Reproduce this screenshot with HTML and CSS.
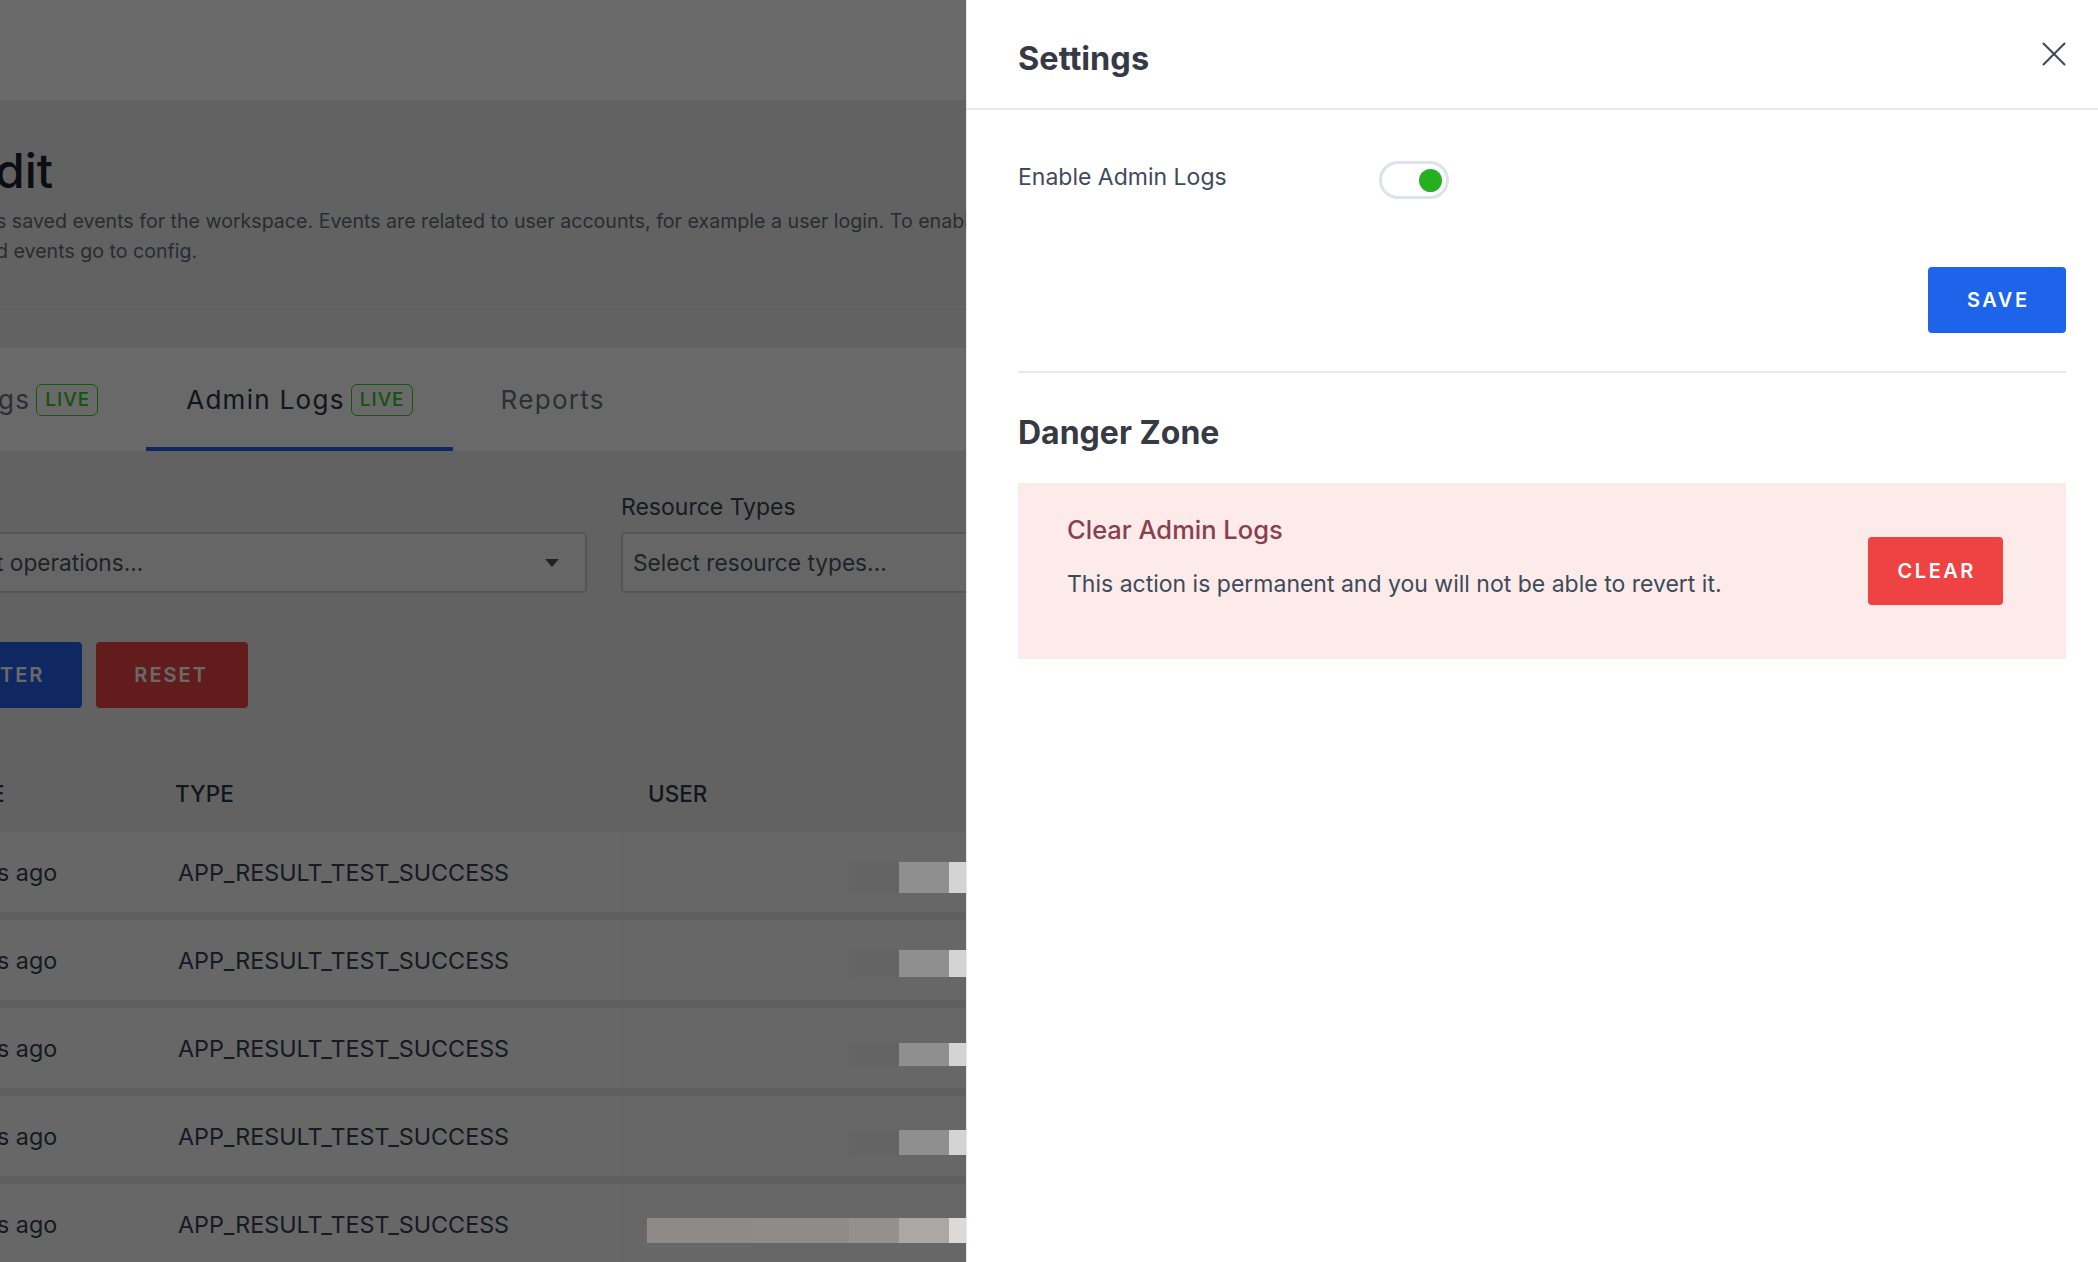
FILE: index.html
```html
<!DOCTYPE html>
<html lang="en">
<head>
<meta charset="utf-8">
<title>Admin Logs – Settings</title>
<link rel="stylesheet" href="styles.css">
</head>
<body>
<div class="app">
  <header class="topbar"></header>

  <section class="intro">
    <h1 class="intro-title">dit</h1>
    <p class="intro-desc">s saved events for the workspace. Events are related to user accounts, for example a user login. To enable the more detailed<br>d events go to config.</p>
  </section>

  <nav class="tabs">
    <div class="tab tab-first"><span>gs</span><span class="badge">LIVE</span></div>
    <div class="tab tab-active"><span>Admin Logs</span><span class="badge">LIVE</span></div>
    <div class="tab"><span>Reports</span></div>
  </nav>

  <section class="filters">
    <div class="filter-grid">
      <div class="filter-label"></div>
      <div class="filter-label">Resource Types</div>
      <div class="select select-first"><span class="select-text-cut">t operations...</span><span class="caret"></span></div>
      <div class="select">Select resource types...</div>
    </div>
    <div class="actions">
      <button class="btn btn-filter">TER</button>
      <button class="btn btn-reset">RESET</button>
    </div>

    <div class="table">
      <div class="thead">
        <div class="th th-cut">E</div>
        <div class="th th-type">TYPE</div>
        <div class="th th-user">USER</div>
      </div>
      <div class="rows">
        <div class="row">
          <div class="cell cell-time">s ago</div>
          <div class="cell cell-type">APP_RESULT_TEST_SUCCESS</div>
          <div class="cell cell-user"><div class="redact redact-short r-h31"><i class="px px-a"></i><i class="px px-b"></i><i class="px px-c"></i></div></div>
        </div>
        <div class="row">
          <div class="cell cell-time">s ago</div>
          <div class="cell cell-type">APP_RESULT_TEST_SUCCESS</div>
          <div class="cell cell-user"><div class="redact redact-short r-h27"><i class="px px-a"></i><i class="px px-b"></i><i class="px px-c"></i></div></div>
        </div>
        <div class="row">
          <div class="cell cell-time">s ago</div>
          <div class="cell cell-type">APP_RESULT_TEST_SUCCESS</div>
          <div class="cell cell-user"><div class="redact redact-short r-h23"><i class="px px-a"></i><i class="px px-b"></i><i class="px px-c"></i></div></div>
        </div>
        <div class="row">
          <div class="cell cell-time">s ago</div>
          <div class="cell cell-type">APP_RESULT_TEST_SUCCESS</div>
          <div class="cell cell-user"><div class="redact redact-short r-h25"><i class="px px-a"></i><i class="px px-b"></i><i class="px px-c"></i></div></div>
        </div>
        <div class="row">
          <div class="cell cell-time">s ago</div>
          <div class="cell cell-type">APP_RESULT_TEST_SUCCESS</div>
          <div class="cell cell-user"><div class="redact redact-long r-h25"><i class="px px-w1"></i><i class="px px-w2"></i><i class="px px-w3"></i><i class="px px-w4"></i><i class="px px-w5"></i></div></div>
        </div>
      </div>
    </div>
  </section>
</div>

<div class="overlay"></div>

<aside class="drawer">
  <div class="drawer-header">
    <h2 class="drawer-title">Settings</h2>
    <button class="close" aria-label="Close">
      <svg width="24" height="24" viewBox="0 0 24 24" fill="none" stroke="#3d4758" stroke-width="2" stroke-linecap="round"><line x1="1.5" y1="1.5" x2="22.5" y2="22.5"/><line x1="22.5" y1="1.5" x2="1.5" y2="22.5"/></svg>
    </button>
  </div>
  <div class="drawer-body">
    <div class="setting-row">
      <span class="setting-label">Enable Admin Logs</span>
      <span class="toggle"><span class="knob"></span></span>
    </div>
    <div class="save-row"><button class="btn-solid btn-save">SAVE</button></div>
    <div class="divider"></div>
    <h3 class="section-title">Danger Zone</h3>
    <div class="danger-box">
      <div class="danger-text">
        <div class="danger-title">Clear Admin Logs</div>
        <div class="danger-desc">This action is permanent and you will not be able to revert it.</div>
      </div>
      <button class="btn-solid btn-clear">CLEAR</button>
    </div>
  </div>
</aside>
</body>
</html>
```

FILE: styles.css
```css
* { box-sizing: border-box; }

html, body {
  margin: 0;
  padding: 0;
}

body {
  width: 2098px;
  height: 1262px;
  overflow: hidden;
  background: #efefef;
  font-family: Inter, "Noto Sans", "Liberation Sans", sans-serif;
}

/* ---------- underlying page ---------- */
.app {
  width: 2098px;
}

.topbar {
  height: 100px;
  background: #ffffff;
}

.intro {
  height: 210px;
  padding-top: 42px;
  background: #efefef;
  border-bottom: 1px solid #e0e0e0;
}

.intro-title {
  margin: 0 0 0 -5px;
  font-size: 48px;
  line-height: 58px;
  font-weight: 500;
  color: #1a2230;
}

.intro-desc {
  margin: 6px 0 0 -4px;
  font-size: 19.6px;
  line-height: 30px;
  color: #646b78;
  white-space: nowrap;
}

.tabs {
  margin-top: 38px;
  height: 103px;
  background: #ffffff;
  display: flex;
  gap: 8px;
}

.tab {
  display: flex;
  align-items: center;
  gap: 6px;
  padding: 0 40px;
  font-size: 26px;
  letter-spacing: 1.3px;
  color: #6b7280;
}

.tab-first {
  padding-left: 0;
  margin-left: -2px;
}

.tab-active {
  color: #2b3544;
  box-shadow: inset 0 -4px 0 #2563eb;
}

.badge {
  display: flex;
  align-items: center;
  height: 32px;
  padding: 0 7px 0 8px;
  border: 1.5px solid #36cf28;
  border-radius: 6px;
  font-size: 19px;
  font-weight: 500;
  letter-spacing: 1px;
  color: #33c824;
}

.filters {
  padding-top: 41px;
  background: #efefef;
}

.filter-grid {
  display: grid;
  grid-template-columns: 587px 620px;
  column-gap: 34px;
  row-gap: 10px;
}

.filter-label {
  height: 30px;
  font-size: 23px;
  line-height: 30px;
  color: #374151;
}

.select {
  height: 61px;
  border: 2px solid #cdd1d6;
  border-radius: 4px;
  background: #f8f8f8;
  display: flex;
  align-items: center;
  padding: 0 10px;
  font-size: 22.7px;
  color: #4b5563;
}

.select-first {
  border-left: none;
  border-radius: 0 4px 4px 0;
  padding: 0 26px 0 0;
  justify-content: space-between;
}

.select-text-cut {
  margin-left: -4px;
}

.caret {
  width: 0;
  height: 0;
  border-left: 7px solid transparent;
  border-right: 7px solid transparent;
  border-top: 8px solid #4b5563;
}

.actions {
  display: flex;
  gap: 14px;
  margin-top: 49px;
}

.btn {
  height: 66px;
  border: none;
  border-radius: 4px;
  font-family: inherit;
  font-size: 20px;
  font-weight: 600;
  letter-spacing: 2px;
  color: #ffffff;
  display: flex;
  align-items: center;
}

.btn-filter {
  background: #2563eb;
  padding: 0 38px 0 0;
  border-radius: 0 4px 4px 0;
}

.btn-reset {
  background: #ef4444;
  padding: 0 40px 0 38px;
}

.table {
  margin-top: 46px;
}

.thead {
  display: grid;
  grid-template-columns: 148px 474px 1fr;
  height: 78px;
  align-items: center;
  font-size: 22.5px;
  font-weight: 500;
  color: #2f3846;
}

.th-cut { margin-left: -9px; }
.th-type { padding-left: 27px; }
.th-user { padding-left: 26px; }

.rows {
  display: flex;
  flex-direction: column;
  gap: 8px;
  background: #e6e6e6;
}

.row {
  display: grid;
  grid-template-columns: 148px 474px 1fr;
  height: 80px;
  background: #fbfbfb;
}

.cell {
  display: flex;
  align-items: center;
  font-size: 23.3px;
  color: #374151;
}

.cell-time { padding-left: 0; margin-left: -3px; }

.cell-type {
  padding-left: 29px;
  border-left: 1px solid #f2f2f2;
}

.cell-user {
  border-left: 1px solid #f2f2f2;
}

/* privacy redaction blocks (sit above the dimming overlay) */
.redact {
  position: relative;
  z-index: 20;
  display: flex;
}

.redact-short { margin-left: 226px; }
.redact-long { margin-left: 24px; }

.r-h31 { height: 31px; margin-top: 10px; }
.r-h27 { height: 27px; margin-top: 6px; }
.r-h23 { height: 23px; margin-top: 12px; }
.r-h25 { height: 25px; margin-top: 12px; }

.px { display: block; height: 100%; width: 50px; }
.px-a { background: #646464; }
.px-b { background: #8f8f8f; }
.px-c { background: #d4d4d4; }
.px-w1 { width: 104px; background: #8e8a88; }
.px-w2 { width: 98px; background: #8f8b89; }
.px-w3 { background: #94908d; }
.px-w4 { background: #aba7a4; }
.px-w5 { background: #dcd9d6; }

/* ---------- dimming overlay ---------- */
.overlay {
  position: fixed;
  inset: 0;
  z-index: 10;
  background: rgba(0, 0, 0, 0.59);
}

/* ---------- drawer ---------- */
.drawer {
  position: fixed;
  top: 0;
  right: 0;
  bottom: 0;
  width: 1132px;
  z-index: 30;
  background: #ffffff;
  border-left: 1px solid #e4e4e8;
}

.drawer-header {
  height: 110px;
  display: flex;
  align-items: center;
  justify-content: space-between;
  padding: 0 32px 0 51px;
  border-bottom: 2px solid #e8e8ec;
}

.drawer-title {
  margin: 8px 0 0;
  font-size: 32.5px;
  line-height: 39px;
  font-weight: 700;
  color: #363a44;
}

.close {
  width: 24px;
  height: 24px;
  padding: 0;
  border: none;
  background: none;
  display: flex;
}

.drawer-body {
  padding: 0 32px 0 51px;
}

.setting-row {
  margin-top: 51px;
  height: 38px;
  display: flex;
  align-items: center;
}

.setting-label {
  flex: 0 0 361px;
  margin-bottom: 6px;
  font-size: 23px;
  line-height: 30px;
  color: #3f4a5c;
}

.toggle {
  width: 70px;
  height: 38px;
  border: 3px solid #dde2eb;
  border-radius: 19px;
  display: flex;
  align-items: center;
  justify-content: flex-end;
  padding: 0 4px;
}

.knob {
  width: 23px;
  height: 23px;
  border-radius: 50%;
  background: #25b020;
}

.save-row {
  margin-top: 68px;
  display: flex;
  justify-content: flex-end;
}

.btn-solid {
  border: none;
  border-radius: 4px;
  font-family: inherit;
  font-size: 20px;
  font-weight: 600;
  letter-spacing: 2.5px;
  color: #ffffff;
  display: flex;
  align-items: center;
  justify-content: center;
  padding: 0 0 0 2.5px;
}

.btn-save {
  width: 138px;
  height: 66px;
  background: #1d64ea;
}

.divider {
  margin-top: 38px;
  height: 2px;
  background: #e6e7eb;
}

.section-title {
  margin: 40px 0 0;
  font-size: 32px;
  line-height: 39px;
  font-weight: 700;
  color: #363a44;
}

.danger-box {
  margin-top: 31px;
  height: 176px;
  background: #fcebe8;
  padding: 31px 63px 0 49px;
  display: flex;
  justify-content: space-between;
  align-items: flex-start;
}

.danger-title {
  font-size: 25.5px;
  line-height: 32px;
  font-weight: 500;
  color: #8a3e50;
}

.danger-desc {
  margin-top: 22px;
  font-size: 23px;
  line-height: 32px;
  color: #3d4a5c;
}

.btn-clear {
  margin-top: 23px;
  width: 135px;
  height: 68px;
  background: #ef4343;
}
```
